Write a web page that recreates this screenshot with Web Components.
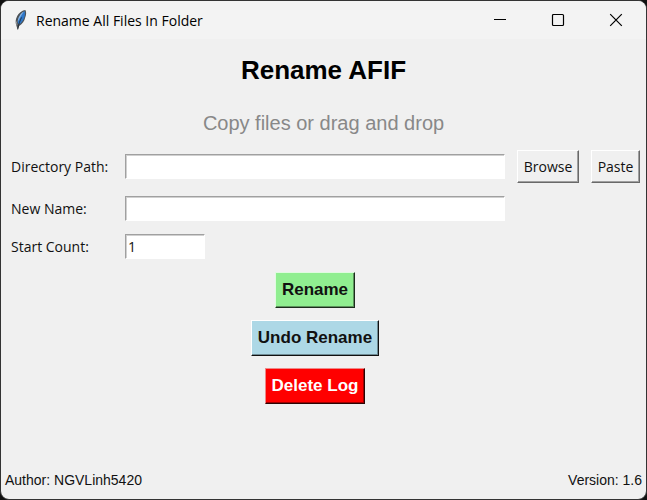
<!DOCTYPE html>
<html lang="en">
<head>
<meta charset="utf-8">
<title>Rename All Files In Folder</title>
<style>
  html, body { height: 100%; margin: 0; background: #111; }
  body { font-family: "Open Sans", "Noto Sans", sans-serif; font-size: 14px; color: #111; }
</style>
</head>
<body>
<app-window>
  <title-bar slot="bar">Rename All Files In Folder</title-bar>
  <page-heading>
    Rename AFIF
    <span slot="hint">Copy files or drag and drop</span>
  </page-heading>
  <rename-form>
    <field-row label="Directory Path:">
      <raised-button>Browse</raised-button>
      <raised-button>Paste</raised-button>
    </field-row>
    <field-row label="New Name:"></field-row>
    <field-row label="Start Count:" value="1" size="short"></field-row>
    <raised-button slot="actions" tone="green">Rename</raised-button>
    <raised-button slot="actions" tone="blue">Undo Rename</raised-button>
    <raised-button slot="actions" tone="red">Delete Log</raised-button>
  </rename-form>
  <status-footer slot="footer">
    <span>Author: NGVLinh5420</span>
    <span>Version: 1.6</span>
  </status-footer>
</app-window>

<script>
  const define = (name, markup, setup) => {
    const template = document.createElement("template");
    template.innerHTML = markup;
    customElements.define(name, class extends HTMLElement {
      constructor() {
        super();
        this.attachShadow({ mode: "open" }).append(template.content.cloneNode(true));
      }
      connectedCallback() { if (setup) setup(this, this.shadowRoot); }
    });
  };

  define("app-window", `
    <style>
      :host { display: flex; flex-direction: column; box-sizing: border-box; min-height: 100vh;
              background: #f0f0f0; border: 1px solid #333; border-radius: 9px; overflow: hidden; }
      main { flex: 1; }
    </style>
    <slot name="bar"></slot>
    <main><slot></slot></main>
    <slot name="footer"></slot>`);

  define("title-bar", `
    <style>
      :host { display: flex; align-items: center; height: 38px; padding-right: 1px; background: #f3f3f3; color: #000; }
      .logo { width: 16px; height: 22px; margin: 0 8px 0 11px; flex: none; }
      .name { flex: 1; white-space: nowrap; }
      button { width: 58px; height: 38px; padding: 0; border: 0; background: none; color: #000;
               display: grid; place-items: center; }
      button svg { width: 14px; height: 14px; fill: none; stroke: currentColor; }
    </style>
    <svg class="logo" viewBox="0 0 16 22" aria-hidden="true">
      <path d="M13.4 1 C10.5 1 6.6 4 5 7.4 C3.6 10.2 3.2 13 4.2 16 L5.6 20.8 L7.2 17 C10.4 15 12.6 12 13.2 8.6 C14.2 6.4 14.6 3 13.4 1Z" fill="#4d5358"/>
      <path d="M12.8 2 C13.4 5.8 12.6 10.8 7.4 15.4 L5.8 14 C6 9 8.6 4.4 12.8 2Z" fill="#2f78ca"/>
      <path d="M11.8 2.6 C8.6 4.4 6 8.4 5.6 13 C7.6 9.6 9.4 6.4 11.8 2.6Z" fill="#8bb5e2"/>
      <path d="M9.6 8.4 C8.2 11 6.6 15 5.8 20.4" fill="none" stroke="#1b222c" stroke-width=".8"/>
      <path d="M4.4 12.5 L5 16" stroke="#a4a9ae" stroke-width=".8"/>
    </svg>
    <span class="name"><slot></slot></span>
    <button type="button" aria-label="Minimize"><svg viewBox="0 0 14 14"><path d="M1 6.5H13"/></svg></button>
    <button type="button" aria-label="Maximize"><svg viewBox="0 0 14 14"><rect x="1.5" y="1.5" width="11" height="11" rx="1" stroke-width="1.2"/></svg></button>
    <button type="button" aria-label="Close"><svg viewBox="0 0 14 14"><path d="M1.2 1.2L12.8 12.8M12.8 1.2L1.2 12.8" stroke-width="1.2"/></svg></button>`);

  define("page-heading", `
    <style>
      :host { display: block; text-align: center; font-family: "Liberation Sans", Arial, sans-serif; padding: 15px 0 13px; }
      h1 { margin: 0 0 23px; font-size: 26px; line-height: 32px; font-weight: 700; color: #000; }
      p { margin: 0; font-size: 20px; line-height: 28px; color: #888; }
    </style>
    <h1><slot></slot></h1>
    <p><slot name="hint"></slot></p>`);

  define("rename-form", `
    <style>
      form { display: grid; grid-template-columns: 102px 1fr 62px 49px; gap: 13px 12px; padding: 0 6px 0 10px; }
      .actions { grid-column: 2; display: flex; flex-direction: column; align-items: center; gap: 12px; }
    </style>
    <form><slot></slot><div class="actions"><slot name="actions"></slot></div></form>`);

  define("field-row", `
    <style>
      :host { display: grid; grid-column: 1 / -1; grid-template-columns: subgrid; align-items: center; }
      label { white-space: nowrap; }
      input { box-sizing: border-box; width: 100%; height: 25px; padding: 0 2px; background: #fff; color: #111;
              font: inherit; border: 1px solid; border-radius: 0; outline: 0;
              border-color: #a0a0a0 #fff #fff #a0a0a0; box-shadow: inset 1px 1px #d0d0d0; }
      :host([size="short"]) input { width: 80px; }
    </style>
    <label for="entry"></label>
    <input id="entry" type="text" autocomplete="off">
    <slot></slot>`, (host, root) => {
      root.querySelector("label").textContent = host.getAttribute("label");
      root.querySelector("input").value = host.getAttribute("value") || "";
    });

  define("raised-button", `
    <style>
      :host { display: block; --face: #f0f0f0; --light: #fff; --shade: #a0a0a0; --dark: #696969; }
      button { box-sizing: border-box; width: 100%; height: 33px; padding: 0 4px; font: inherit; color: #111;
               background: var(--face); border: 1px solid; border-radius: 0; white-space: nowrap;
               border-color: var(--light) var(--dark) var(--dark) var(--light);
               box-shadow: inset -1px -1px var(--shade), inset 1px 1px var(--face); }
      :host([tone]) button { height: 36px; padding: 0 6px; font: 700 17px "Liberation Sans", Arial, sans-serif; }
      :host([tone="green"]) { --face: #90ee90; --light: #e0fbe0; --shade: #5c925c; --dark: #1c2c1c; }
      :host([tone="blue"]) { --face: #add8e6; --light: #fff; --shade: #6f8b94; --dark: #111; }
      :host([tone="red"]) { --face: #f00; --light: #e88; --shade: #a00000; --dark: #2b0505; }
      :host([tone="red"]) button { color: #fff; }
    </style>
    <button type="button"><slot></slot></button>`);

  define("status-footer", `
    <style>
      :host { display: flex; justify-content: space-between; padding: 0 4px 9px;
              font: 14px/20px "Liberation Sans", Arial, sans-serif; }
    </style>
    <slot></slot>`);
</script>
</body>
</html>
